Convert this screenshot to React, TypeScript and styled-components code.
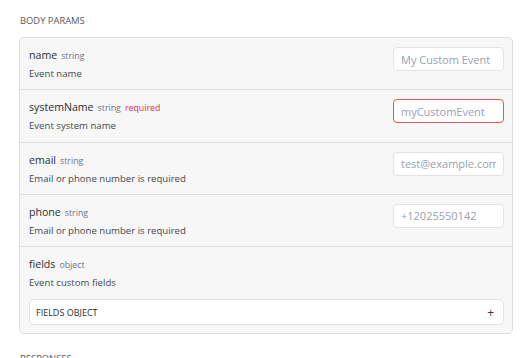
import React from 'react';
import styled, { createGlobalStyle } from 'styled-components';

const GlobalStyle = createGlobalStyle`
  body {
    margin: 0;
    background: #ffffff;
    font-family: "Open Sans", "Noto Sans", sans-serif;
  }
`;

interface Param {
  name: string;
  type: string;
  required?: boolean;
  description: string;
  placeholder?: string;
}

const params: Param[] = [
  { name: 'name', type: 'string', description: 'Event name', placeholder: 'My Custom Event' },
  {
    name: 'systemName',
    type: 'string',
    required: true,
    description: 'Event system name',
    placeholder: 'myCustomEvent',
  },
  {
    name: 'email',
    type: 'string',
    description: 'Email or phone number is required',
    placeholder: 'test@example.com',
  },
  {
    name: 'phone',
    type: 'string',
    description: 'Email or phone number is required',
    placeholder: '+12025550142',
  },
];

const App = () => {
  return (
    <>
      <GlobalStyle />
      <Page>
        <SectionTitle>Body Params</SectionTitle>
        <Card>
          {params.map((p) => (
            <Row key={p.name}>
              <Info>
                <NameLine>
                  <ParamName>{p.name}</ParamName>
                  <ParamType>{p.type}</ParamType>
                  {p.required && <Required>required</Required>}
                </NameLine>
                <Description>{p.description}</Description>
              </Info>
              <Input placeholder={p.placeholder} invalid={p.required} />
            </Row>
          ))}
          <Row>
            <Info>
              <NameLine>
                <ParamName>fields</ParamName>
                <ParamType>object</ParamType>
              </NameLine>
              <Description>Event custom fields</Description>
              <ObjectBox>
                <span>Fields object</span>
                <Plus>+</Plus>
              </ObjectBox>
            </Info>
          </Row>
        </Card>
        <SectionTitle>Responses</SectionTitle>
      </Page>
    </>
  );
};

export default App;

const Page = styled.div`
  padding: 14px 15px 0 19px;
  width: 494px;
`;

const SectionTitle = styled.h4`
  margin: 0 0 9px 1px;
  font-size: 9.4px;
  font-weight: 400;
  line-height: 14px;
  text-transform: uppercase;
  color: #555a60;
  & + div {
    margin-bottom: 18px;
  }
`;

const Card = styled.div`
  border: 1px solid #dedede;
  border-radius: 5px;
  background: #f7f7f7;
  overflow: hidden;
`;

const Row = styled.div`
  display: flex;
  justify-content: space-between;
  align-items: flex-start;
  padding: 8px 8px 8.3px 9px;
  & + & {
    border-top: 1px solid #e0e0e0;
  }
`;

const Info = styled.div`
  flex: 1;
  display: flex;
  flex-direction: column;
`;

const NameLine = styled.div`
  display: flex;
  align-items: baseline;
  gap: 4px;
  height: 18px;
  line-height: 18px;
`;

const ParamName = styled.span`
  font-size: 10.6px;
  color: #2b2f33;
`;

const ParamType = styled.span`
  font-size: 8.8px;
  color: #6a7588;
`;

const Required = styled.span`
  font-size: 8.8px;
  color: #dc3545;
`;

const Description = styled.div`
  margin-top: 2px;
  font-size: 9.6px;
  line-height: 15px;
  color: #45494f;
`;

const Input = styled.input<{ invalid?: boolean }>`
  box-sizing: border-box;
  width: 111px;
  height: 24px;
  margin-top: 1px;
  padding: 0 7px;
  border: 1px solid ${({ invalid }) => (invalid ? '#e2545f' : '#e2e3e6')};
  border-radius: 4px;
  background: #ffffff;
  font-family: inherit;
  font-size: 11px;
  outline: none;
  &::placeholder {
    color: #9aa1ad;
  }
`;

const ObjectBox = styled.div`
  display: flex;
  justify-content: space-between;
  align-items: center;
  box-sizing: border-box;
  height: 26px;
  margin-top: 9px;
  padding: 0 9px 0 6px;
  border: 1px solid #e2e2e2;
  border-radius: 5px;
  background: #ffffff;
  font-size: 9px;
  text-transform: uppercase;
  color: #2a2d31;
`;

const Plus = styled.span`
  font-size: 12px;
  color: #3a3d42;
`;
